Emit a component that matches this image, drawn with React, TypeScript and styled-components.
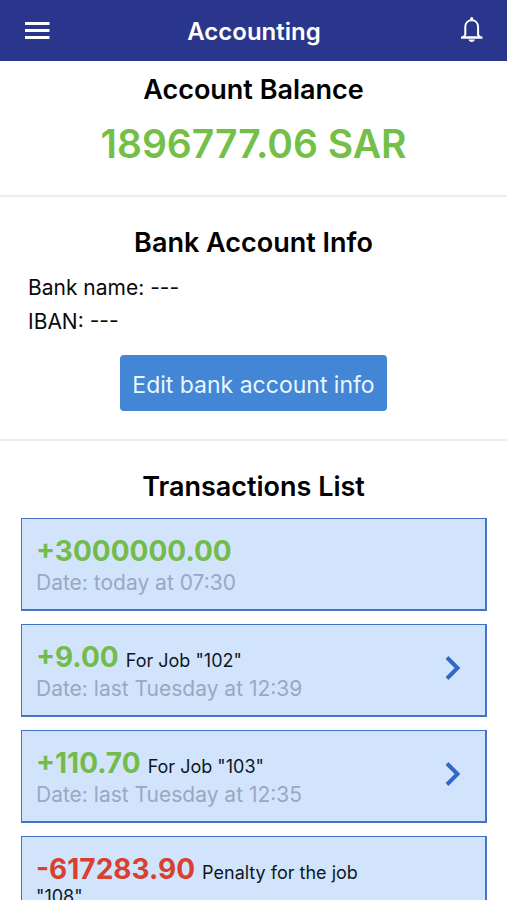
import React from "react";
import styled, { createGlobalStyle } from "styled-components";

const GlobalStyle = createGlobalStyle`
  * { box-sizing: border-box; }
  html, body { margin: 0; background: #fff; }
  body { font-family: Inter, "Liberation Sans", sans-serif; color: #0b0b0b; }
  h1, h2, p, ul { margin: 0; padding: 0; }
`;

const Screen = styled.div`
  min-height: 100vh;
`;

const TopBar = styled.header`
  display: flex;
  align-items: center;
  justify-content: space-between;
  height: 61px;
  padding: 0 20px;
  background: #2a368b;
  color: #fff;
`;

const Title = styled.h1`
  padding-top: 2px;
  font-size: 24px;
  line-height: 32px;
  font-weight: 600;
`;

const IconButton = styled.button`
  display: flex;
  padding: 0;
  border: 0;
  background: none;
  color: inherit;
  cursor: pointer;
`;

const Section = styled.section<{ $top: number; $bottom: number }>`
  padding: ${(p) => p.$top}px 20px ${(p) => p.$bottom}px;
  border-bottom: 2px solid #ededee;
`;

const Heading = styled.h2`
  font-size: 27px;
  line-height: 32px;
  font-weight: 600;
  text-align: center;
  color: #000;
`;

const Balance = styled.p`
  margin-top: 14px;
  font-size: 39px;
  line-height: 48px;
  font-weight: 600;
  text-align: center;
  color: #73bf47;
`;

const BankDetails = styled.div`
  padding: 12px 8px;
  font-size: 21px;
  line-height: 34px;
`;

const EditButton = styled.button`
  display: block;
  margin: 4px auto 0;
  padding: 14px 12px 10px;
  border: 0;
  border-radius: 4px;
  background: #4386d5;
  color: #e9f7ff;
  font: inherit;
  font-size: 23px;
  line-height: 32px;
  cursor: pointer;
`;

const List = styled.ul`
  display: grid;
  gap: 13px;
  margin: 15px 0 0 1px;
  list-style: none;
`;

const Card = styled.li`
  display: flex;
  align-items: center;
  justify-content: space-between;
  padding: 14px 17px 12px 14px;
  border: 1px solid #4373c6;
  border-width: 1px 2px 2px 1px;
  background: #d2e4fc;
`;

const CardText = styled.div`
  max-width: 350px;
`;

const Summary = styled.p`
  font-size: 18px;
  line-height: 20px;
  color: #0d1826;
`;

const Amount = styled.span<{ $negative: boolean }>`
  margin-right: 2px;
  font-size: 28px;
  line-height: 36px;
  font-weight: 700;
  color: ${(p) => (p.$negative ? "#d8402f" : "#73bc4b")};
`;

const DateLine = styled.p`
  font-size: 21px;
  line-height: 28px;
  color: #98a8c2;
`;

type Transaction = { amount: string; note?: string; date: string; link: boolean };

const transactions: Transaction[] = [
  { amount: "+3000000.00", date: "today at 07:30", link: false },
  { amount: "+9.00", note: 'For Job "102"', date: "last Tuesday at 12:39", link: true },
  { amount: "+110.70", note: 'For Job "103"', date: "last Tuesday at 12:35", link: true },
  { amount: "-617283.90", note: 'Penalty for the job "108"', date: "last Tuesday at 12:30", link: false },
];

const MenuIcon = () => (
  <svg width="33" height="33" viewBox="0 0 33 33" fill="none" stroke="currentColor" strokeWidth="3" aria-hidden="true">
    <path d="M5 9.5h24.5M5 16.5h24.5M5 23.5h24.5" />
  </svg>
);

const BellIcon = () => (
  <svg width="32" height="33" viewBox="0 0 32 33" aria-hidden="true">
    <path
      d="M10.3 21V13C10.3 9 13 6.300 16.700 6.300S23.100 9 23.100 13V21L25.500 23.500H8L10.300 21"
      fill="none"
      stroke="currentColor"
      strokeWidth="2"
    />
    <path d="M6 22.600H27.400V24.400H6zM15.200 6V4.500a1.500 1.500 0 0 1 3 0V6zM13.500 25.600h6.400c-.3 1.500-1.600 2.400-3.200 2.400s-2.900-.9-3.200-2.400z" fill="currentColor" />
  </svg>
);

const ChevronIcon = () => (
  <svg width="32" height="32" viewBox="0 0 32 32" fill="none" stroke="#3169cb" strokeWidth="4" aria-hidden="true">
    <path d="M11 2.500l10.500 10.500L11 23.500" />
  </svg>
);

export default function App() {
  return (
    <Screen>
      <GlobalStyle />
      <TopBar>
        <IconButton aria-label="Menu"><MenuIcon /></IconButton>
        <Title>Accounting</Title>
        <IconButton aria-label="Notifications"><BellIcon /></IconButton>
      </TopBar>
      <main>
        <Section $top={13} $bottom={27}>
          <Heading>Account Balance</Heading>
          <Balance>1896777.06 SAR</Balance>
        </Section>
        <Section $top={30} $bottom={28}>
          <Heading>Bank Account Info</Heading>
          <BankDetails>
            <p>Bank name: ---</p>
            <p>IBAN: ---</p>
          </BankDetails>
          <EditButton>Edit bank account info</EditButton>
        </Section>
        <Section $top={30} $bottom={20}>
          <Heading>Transactions List</Heading>
          <List>
            {transactions.map((t) => (
              <Card key={t.amount}>
                <CardText>
                  <Summary>
                    <Amount $negative={t.amount.startsWith("-")}>{t.amount}</Amount> {t.note}
                  </Summary>
                  <DateLine>Date: {t.date}</DateLine>
                </CardText>
                {t.link && (
                  <IconButton aria-label="Open transaction"><ChevronIcon /></IconButton>
                )}
              </Card>
            ))}
          </List>
        </Section>
      </main>
    </Screen>
  );
}
